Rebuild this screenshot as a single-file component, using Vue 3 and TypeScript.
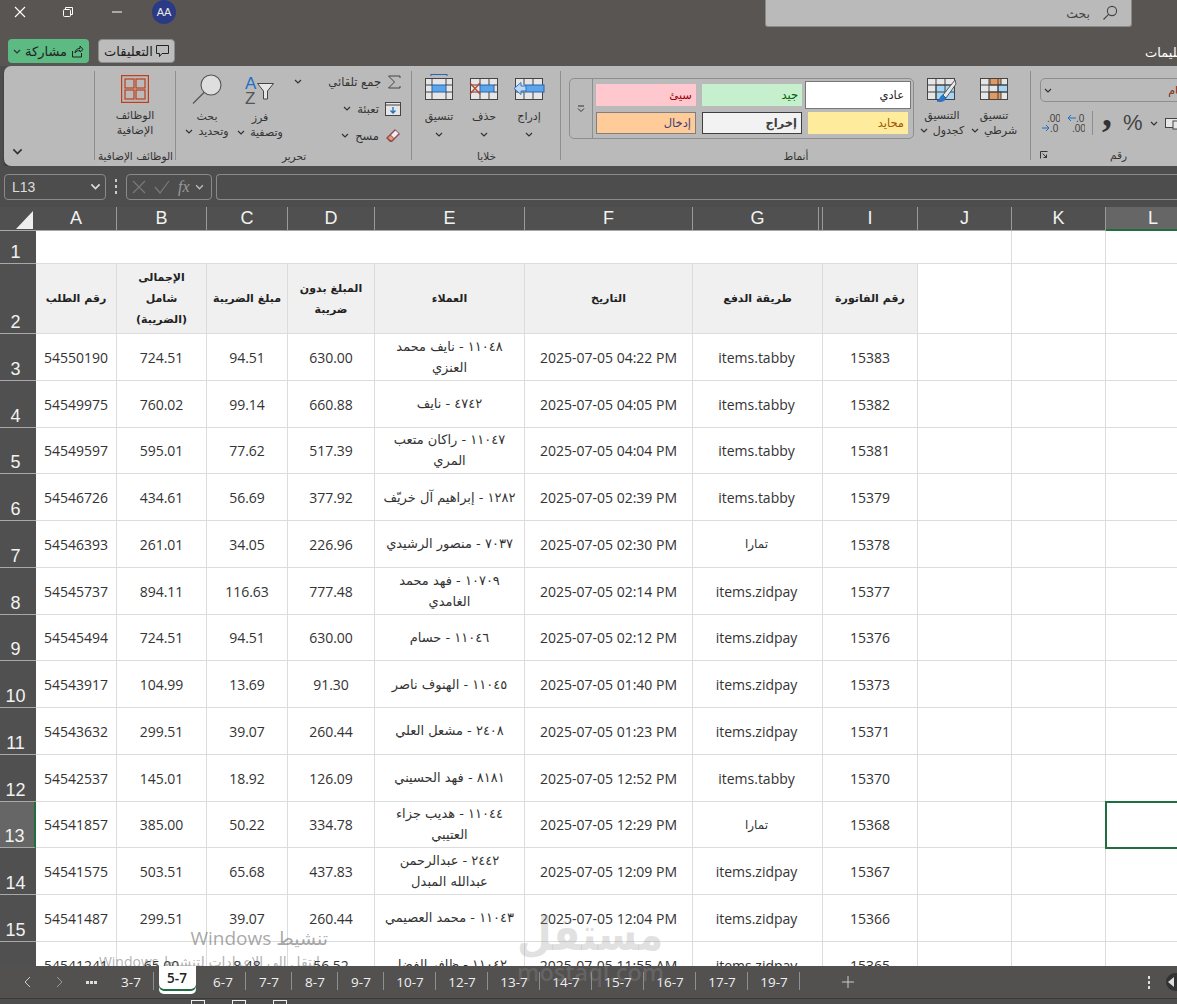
<template>
  <div class="app">
    <svg class="defs" width="0" height="0">
      <symbol id="chev" viewBox="0 0 8 5"><path d="M1 1l3 3 3-3" fill="none" stroke="currentColor" stroke-width="1.2" /></symbol>
    </svg>

    <!-- title bar -->
    <header class="topbar">
      <div class="topbar__row">
        <div class="win-controls">
          <svg width="14" height="14" viewBox="0 0 14 14"><path d="M2 2l10 10M12 2L2 12" stroke="#fff" stroke-width="1.1" /></svg>
          <svg width="12" height="12" viewBox="0 0 12 12" fill="none" stroke="#fff"><rect x="1.5" y="3.5" width="7" height="7" rx="1" /><path d="M3.5 3V1.5h7v7H9" /></svg>
          <svg width="12" height="12" viewBox="0 0 12 12"><path d="M1 6h10" stroke="#fff" /></svg>
          <div class="avatar">AA</div>
        </div>
        <div class="search">
          <span class="ar">بحث</span>
          <svg width="16" height="16" viewBox="0 0 16 16" fill="none" stroke="#444" stroke-width="1.1"><circle cx="10" cy="6" r="4.6" /><path d="M6.6 9.4L1.5 14.5" /></svg>
        </div>
      </div>
      <div class="topbar__row topbar__row--actions">
        <button class="btn-share">
          <svg class="chev" width="8" height="5"><use href="#chev" /></svg>
          <span class="ar">مشاركة</span>
          <svg width="13" height="13" viewBox="0 0 13 13" fill="none" stroke="#222"><path d="M1.5 6v6h9V8M4 8c0-3 2-4.500 5-4.500V1l3 3.500L9 7V5.500C7 5.500 5 6 4 8z" /></svg>
        </button>
        <button class="btn-comments">
          <span class="ar">التعليقات</span>
          <svg width="13" height="12" viewBox="0 0 13 12" fill="none" stroke="#222"><path d="M.5.5h12v8H6l-2.500 3v-3H.5z" /></svg>
        </button>
        <span class="tab-clipped ar">تعليمات</span>
      </div>
    </header>

    <!-- ribbon -->
    <section class="ribbon">
      <div class="group group--collapse">
        <svg class="collapse-chev" width="11" height="7"><use href="#chev" /></svg>
      </div>

      <div class="group group--addins">
        <div class="group__body">
          <div class="rbtn rbtn--addins">
            <svg class="rbtn__icon" width="28" height="28" viewBox="0 0 28 28" fill="none" stroke="#bf3e1c" stroke-width="1.2">
              <rect x=".6" y=".6" width="26.800" height="26.800" />
              <rect x="4" y="4" width="9" height="9" /><rect x="15" y="4" width="9" height="9" />
              <rect x="4" y="15" width="9" height="9" /><rect x="15" y="15" width="9" height="9" />
            </svg>
            <span class="ar">الوظائف</span>
            <span class="ar">الإضافية</span>
          </div>
        </div>
        <div class="group__label ar">الوظائف الإضافية</div>
      </div>

      <div class="group group--editing">
        <div class="group__body">
          <div class="rbtn rbtn--find">
            <svg class="rbtn__icon" width="30" height="32" viewBox="0 0 30 32">
              <circle cx="19" cy="12" r="10" fill="#dedede" stroke="#555" stroke-width="1.1" />
              <path d="M12 19.500L1 30.500" stroke="#555" stroke-width="1.200" />
            </svg>
            <span class="ar">بحث</span>
            <span class="ar with-chev">
              <svg class="chev" width="8" height="5"><use href="#chev" /></svg>وتحديد
            </span>
          </div>
          <div class="rbtn rbtn--sort">
            <svg class="rbtn__icon" width="30" height="30" viewBox="0 0 30 30">
              <text x="0" y="14" class="sort-a">A</text>
              <text x="0" y="29" class="sort-z">Z</text>
              <path d="M12.500 8.500h16l-6 7.500v8h-4v-8z" fill="#e6e6e6" stroke="#444" />
            </svg>
            <span class="ar">فرز</span>
            <span class="ar with-chev">
              <svg class="chev" width="8" height="5"><use href="#chev" /></svg>وتصفية
            </span>
          </div>
          <div class="tools">
            <div class="tools__row">
              <svg class="chev chev--far" width="8" height="5"><use href="#chev" /></svg>
              <span class="ar">جمع تلقائي</span>
              <svg width="14" height="14" viewBox="0 0 14 14" fill="none" stroke="#444"><path d="M13 3V1H1.500l6 6-6 6H13v-2" /></svg>
            </div>
            <div class="tools__row">
              <svg class="chev" width="8" height="5"><use href="#chev" /></svg>
              <span class="ar">تعبئة</span>
              <svg width="16" height="14" viewBox="0 0 16 14" fill="none"><rect x=".5" y=".5" width="15" height="13" fill="#e6e6e6" stroke="#444" /><path d="M.5 3h15" stroke="#444" /><path d="M8 5v6M5.500 8.500L8 11l2.500-2.500" stroke="#1f6fc4" stroke-width="1.300" /></svg>
            </div>
            <div class="tools__row">
              <svg class="chev" width="8" height="5"><use href="#chev" /></svg>
              <span class="ar">مسح</span>
              <svg width="16" height="15" viewBox="0 0 16 15"><path d="M10 1l5 5-8 8H5L1 10z" fill="#8f4a54" /><path d="M10.500 2.500l3 3-4.500 4.500-3-3z" fill="#eee" /><path d="M5.500 7.500l3 3L6.500 12.500 3 10z" fill="#e8a06a" /></svg>
            </div>
          </div>
        </div>
        <div class="group__label ar">تحرير</div>
      </div>

      <div class="group group--cells">
        <div class="group__body">
          <div class="rbtn rbtn--cell">
            <svg class="rbtn__icon" width="28" height="26" viewBox="0 -4 28 26" fill="none" stroke="#444">
              <path d="M6 -3.500h16M6 -5v3M22 -5v3" stroke="#2a62b5" />
              <rect x=".5" y=".5" width="27" height="21" fill="#e6e6e6" />
              <rect x="7" y="7" width="14" height="7" fill="#5ba6e8" stroke="#2a62b5" />
              <path d="M7 .5v6.500M21 .5v6.500M7 14v7.500M21 14v7.500M.5 7H7M21 7h6.500M.5 14H7M21 14h6.500" />
            </svg>
            <span class="ar">تنسيق</span>
            <svg class="chev chev--below" width="8" height="5"><use href="#chev" /></svg>
          </div>
          <div class="rbtn rbtn--cell">
            <svg class="rbtn__icon" width="30" height="26" viewBox="-1 -4 30 26" fill="none" stroke="#444">
              <rect x=".5" y=".5" width="27" height="21" fill="#e6e6e6" />
              <rect x="10" y="7" width="14" height="7" fill="#5ba6e8" stroke="#2a62b5" />
              <path d="M10 .5v6.500M19 .5v6.500M10 14v7.500M19 14v7.500M.5 7H10M24 7h3.500M.5 14H10M24 14h3.500" />
              <path d="M0 5l10 11M10 5L0 16" stroke="#c0442a" stroke-width="1.300" />
            </svg>
            <span class="ar">حذف</span>
            <svg class="chev chev--below" width="8" height="5"><use href="#chev" /></svg>
          </div>
          <div class="rbtn rbtn--cell">
            <svg class="rbtn__icon" width="32" height="26" viewBox="-2 -4 32 26" fill="none" stroke="#444">
              <rect x=".5" y=".5" width="27" height="21" fill="#e6e6e6" />
              <rect x="10" y="7" width="19" height="7" fill="#5ba6e8" stroke="#2a62b5" />
              <path d="M9 .5v6.500M18 .5v6.500M9 14v7.500M18 14v7.500M.5 14H9" />
              <path d="M-1 10.500l7-6v3.500h5v5H6v3.500z" fill="#bcd8f2" stroke="#2a72c8" />
            </svg>
            <span class="ar">إدراج</span>
            <svg class="chev chev--below" width="8" height="5"><use href="#chev" /></svg>
          </div>
        </div>
        <div class="group__label ar">خلايا</div>
      </div>

      <div class="group group--styles">
        <div class="group__body">
          <div class="gallery">
            <div class="gallery__more">
              <svg width="8" height="8" viewBox="0 0 8 8" fill="none" stroke="#333"><path d="M1 1h6M1 3.500l3 3 3-3" /></svg>
            </div>
            <div class="gallery__grid">
              <div v-for="s in cellStyles" :key="s.label" class="style-cell ar" :class="s.cls">{{ s.label }}</div>
            </div>
          </div>
          <div class="rbtn rbtn--style rbtn--table">
            <svg class="rbtn__icon" width="30" height="28" viewBox="0 0 30 28" fill="none" stroke="#444">
              <rect x=".5" y=".5" width="27" height="21" fill="#e6e6e6" />
              <rect x="9" y="7" width="18.500" height="14.500" fill="#a5d6f5" />
              <path d="M9 .5v21M18 .5v21M.5 7h27M.5 14h27" />
              <path d="M28 2L16 17l3 3L29 6z" fill="#e8e8e8" stroke="#555" />
              <path d="M16 17c-3 1-2 4-6 6 4 1 8 0 9-3z" fill="#2a78cc" stroke="#2a62b5" />
            </svg>
            <span class="ar">التنسيق</span>
            <span class="ar with-chev">
              <svg class="chev" width="8" height="5"><use href="#chev" /></svg>كجدول
            </span>
          </div>
          <div class="rbtn rbtn--style rbtn--cond">
            <svg class="rbtn__icon" width="28" height="22" viewBox="0 0 28 22" fill="none" stroke="#444">
              <rect x=".5" y=".5" width="27" height="21" fill="#e6e6e6" />
              <rect x="10" y=".5" width="11" height="6.500" fill="#e09a62" />
              <rect x="18" y="7" width="9.500" height="7" fill="#a5d6f5" />
              <rect x="9" y="14" width="12" height="7.500" fill="#e09a62" />
              <path d="M9 .5v21M18 .5v21M.5 7h27M.5 14h27" />
            </svg>
            <span class="ar">تنسيق</span>
            <span class="ar with-chev">
              <svg class="chev" width="8" height="5"><use href="#chev" /></svg>شرطي
            </span>
          </div>
        </div>
        <div class="group__label ar">أنماط</div>
      </div>

      <div class="group group--number">
        <div class="numfmt">
          <svg class="chev" width="8" height="5"><use href="#chev" /></svg>
          <span class="numfmt__text ar">عام</span>
        </div>
        <div class="numrow">
          <svg width="18" height="20" viewBox="0 0 18 20">
            <text x="5" y="9" class="dec">.00</text><text x="8" y="19" class="dec">.0</text>
            <path d="M0 15h7M4 12l3 3-3 3" fill="none" stroke="#1f6fc4" />
          </svg>
          <svg width="18" height="20" viewBox="0 0 18 20">
            <text x="9" y="9" class="dec">.0</text><text x="5" y="19" class="dec">.00</text>
            <path d="M9 5H1M4 2L1 5l3 3" fill="none" stroke="#1f6fc4" />
          </svg>
          <i class="numrow__sep"></i>
          <span class="numrow__comma">,</span>
          <span class="numrow__pct">%</span>
          <svg class="chev" width="8" height="5"><use href="#chev" /></svg>
          <svg width="18" height="14" viewBox="0 0 18 14" fill="none" stroke="#444"><rect x=".5" y="2.500" width="14" height="9" fill="#e6e6e6" /><rect x="8" y="5" width="10" height="8" fill="#e6e6e6" /></svg>
        </div>
        <div class="number-foot">
          <svg width="8" height="8" viewBox="0 0 8 8" fill="none" stroke="#333"><path d="M.5 7.500v-7h7M2.500 2.500l4 4M6.500 3.500v3h-3" /></svg>
          <span class="ar">رقم</span>
        </div>
      </div>
    </section>

    <!-- formula bar -->
    <div class="formula">
      <div class="namebox">
        <span>L13</span>
        <svg width="11" height="7"><use href="#chev" /></svg>
      </div>
      <div class="formula__grip"><i></i><i></i><i></i></div>
      <div class="fxbox">
        <svg width="14" height="14" viewBox="0 0 14 14"><path d="M1 1l12 12M13 1L1 13" stroke="#7a7a7a" stroke-width="1.200" /></svg>
        <svg width="16" height="14" viewBox="0 0 16 14"><path d="M1 7l5 6L15 1" fill="none" stroke="#7a7a7a" stroke-width="1.200" /></svg>
        <span class="fxbox__fx">fx</span>
        <svg width="9" height="6"><use href="#chev" /></svg>
      </div>
      <div class="formula__input"></div>
    </div>

    <!-- sheet -->
    <main class="sheet">
      <div class="grid">
        <div class="corner"><svg width="18" height="18"><path d="M17 0v18H0z" fill="#eee" /></svg></div>
        <div
          v-for="c in columns"
          :key="c"
          class="colhead"
          :class="{ 'colhead--active': c === 'L', 'colhead--double': c === 'G' }"
        >{{ c }}</div>

        <div class="rowhead">1</div>
        <div class="cell cell--title"></div>
        <div class="cell"></div>
        <div class="cell"></div>

        <div class="rowhead">2</div>
        <div v-for="h in headers" :key="h" class="cell cell--head ar">{{ h }}</div>
        <div class="cell"></div>
        <div class="cell"></div>
        <div class="cell"></div>

        <template v-for="(r, i) in rows" :key="r.order">
          <div class="rowhead" :class="{ 'rowhead--active': i + 3 === 13 }">{{ i + 3 }}</div>
          <div class="cell">{{ r.order }}</div>
          <div class="cell">{{ r.total }}</div>
          <div class="cell">{{ r.tax }}</div>
          <div class="cell">{{ r.net }}</div>
          <div class="cell cell--client ar" dir="rtl">{{ r.client }}</div>
          <div class="cell">2025-07-05 {{ r.time }}</div>
          <div class="cell cell--pay" :class="{ 'cell--pay-ar': r.pay === tamara }">{{ r.pay }}</div>
          <div class="cell">{{ r.invoice }}</div>
          <div class="cell"></div>
          <div class="cell"></div>
          <div class="cell" :class="{ 'cell--selected': i + 3 === 13 }"></div>
        </template>
      </div>
      <div class="activation">
        <div class="activation__title" dir="rtl">تنشيط Windows</div>
        <div class="activation__text" dir="rtl">انتقل إلى الإعدادات لتنشيط Windows.</div>
      </div>
    </main>

    <!-- sheet tabs -->
    <footer class="tabs">
      <div class="tabs__nav">
        <svg width="8" height="12" viewBox="0 0 8 12" fill="none" stroke="#ccc"><path d="M7 1L2 6l5 5" /></svg>
        <svg width="8" height="12" viewBox="0 0 8 12" fill="none" stroke="#999"><path d="M1 1l5 5-5 5" /></svg>
        <span class="tabs__dots"><i></i><i></i><i></i></span>
      </div>
      <div
        v-for="t in tabs"
        :key="t"
        class="tab"
        :class="{ 'tab--active': t === '5-7', 'tab--wide': t.length > 3 }"
      ><span>{{ t }}</span></div>
      <svg class="tabs__add" width="12" height="12" viewBox="0 0 12 12"><path d="M6 0v12M0 6h12" stroke="#ccc" /></svg>
      <div class="tabs__end">
        <span class="tabs__kebab"><i></i><i></i><i></i></span>
        <svg width="11" height="18" viewBox="0 0 11 18"><path d="M9 0a9 9 0 0 0 0 18h2V0z" fill="#333" /><path d="M2 9l6-5v10z" fill="#ddd" /></svg>
      </div>
    </footer>
    <div class="statusbar">
      <i></i><i></i><i></i>
    </div>

    <div class="mostaql" aria-hidden="true">
      <div class="mostaql__ar ar">مستقل</div>
      <div class="mostaql__en">mostaql.com</div>
    </div>
  </div>
</template>

<script setup lang="ts">
interface Row {
  order: string
  total: string
  tax: string
  net: string
  client: string
  time: string
  pay: string
  invoice: string
}

const columns = ['A', 'B', 'C', 'D', 'E', 'F', 'G', 'I', 'J', 'K', 'L']

const headers = [
  'رقم الطلب',
  'الإجمالى\nشامل\n(الضريبة)',
  'مبلغ الضريبة',
  'المبلغ بدون\nضريبة',
  'العملاء',
  'التاريخ',
  'طريقة الدفع',
  'رقم الفاتورة',
]

const cellStyles = [
  { label: 'سيئ', cls: 'style-cell--bad' },
  { label: 'جيد', cls: 'style-cell--good' },
  { label: 'عادي', cls: 'style-cell--normal' },
  { label: 'إدخال', cls: 'style-cell--input' },
  { label: 'إخراج', cls: 'style-cell--output' },
  { label: 'محايد', cls: 'style-cell--neutral' },
]

const tabby = 'items.tabby'
const zidpay = 'items.zidpay'
const tamara = 'تمارا'

const rows: Row[] = [
  { order: '54550190', total: '724.51', tax: '94.51', net: '630.00', client: '١١٠٤٨ - نايف محمد العنزي', time: '04:22 PM', pay: tabby, invoice: '15383' },
  { order: '54549975', total: '760.02', tax: '99.14', net: '660.88', client: '٤٧٤٢ - نايف', time: '04:05 PM', pay: tabby, invoice: '15382' },
  { order: '54549597', total: '595.01', tax: '77.62', net: '517.39', client: '١١٠٤٧ - راكان متعب المري', time: '04:04 PM', pay: tabby, invoice: '15381' },
  { order: '54546726', total: '434.61', tax: '56.69', net: '377.92', client: '١٢٨٢ - إبراهيم آل خريّف', time: '02:39 PM', pay: tabby, invoice: '15379' },
  { order: '54546393', total: '261.01', tax: '34.05', net: '226.96', client: '٧٠٣٧ - منصور الرشيدي', time: '02:30 PM', pay: tamara, invoice: '15378' },
  { order: '54545737', total: '894.11', tax: '116.63', net: '777.48', client: '١٠٧٠٩ - فهد محمد الغامدي', time: '02:14 PM', pay: zidpay, invoice: '15377' },
  { order: '54545494', total: '724.51', tax: '94.51', net: '630.00', client: '١١٠٤٦ - حسام', time: '02:12 PM', pay: zidpay, invoice: '15376' },
  { order: '54543917', total: '104.99', tax: '13.69', net: '91.30', client: '١١٠٤٥ - الهنوف ناصر', time: '01:40 PM', pay: zidpay, invoice: '15373' },
  { order: '54543632', total: '299.51', tax: '39.07', net: '260.44', client: '٢٤٠٨ - مشعل العلي', time: '01:23 PM', pay: zidpay, invoice: '15371' },
  { order: '54542537', total: '145.01', tax: '18.92', net: '126.09', client: '٨١٨١ - فهد الحسيني', time: '12:52 PM', pay: tabby, invoice: '15370' },
  { order: '54541857', total: '385.00', tax: '50.22', net: '334.78', client: '١١٠٤٤ - هديب جزاء العتيبي', time: '12:29 PM', pay: tamara, invoice: '15368' },
  { order: '54541575', total: '503.51', tax: '65.68', net: '437.83', client: '٢٤٤٢ - عبدالرحمن عبدالله المبدل', time: '12:09 PM', pay: zidpay, invoice: '15367' },
  { order: '54541487', total: '299.51', tax: '39.07', net: '260.44', client: '١١٠٤٣ - محمد العصيمي', time: '12:04 PM', pay: zidpay, invoice: '15366' },
  { order: '54541241', total: '65.00', tax: '8.48', net: '56.52', client: '١١٠٤٢ - ظافر الفضل', time: '11:55 AM', pay: zidpay, invoice: '15365' },
]

const tabs = ['3-7', '5-7', '6-7', '7-7', '8-7', '9-7', '10-7', '12-7', '13-7', '14-7', '15-7', '16-7', '17-7', '19-7']
</script>

<style>
html,
body {
  margin: 0;
  background: #4d4d4d;
}
</style>

<style scoped>
.app {
  position: relative;
  width: 1177px;
  height: 1004px;
  overflow: hidden;
  font-family: "Open Sans", "DejaVu Sans", sans-serif;
  background: #4d4d4d;
  color: #222;
}

.defs {
  position: absolute;
}

.ar {
  font-family: "DejaVu Sans", sans-serif;
}

.chev {
  color: #333;
  flex-shrink: 0;
}

/* title bar */
.topbar {
  height: 66px;
  background: #595552;
}

.topbar__row {
  height: 28px;
  display: flex;
  justify-content: space-between;
  padding-right: 45px;
}

.topbar__row--actions {
  margin-top: 11px;
  height: 24px;
  padding: 0 0 0 8px;
  justify-content: flex-start;
  gap: 9px;
}

.win-controls {
  display: flex;
  align-items: center;
  height: 24px;
  padding-left: 13px;
}

.win-controls svg:nth-child(2) {
  margin-left: 35px;
}

.win-controls svg:nth-child(3) {
  margin-left: 37px;
}

.avatar {
  width: 24px;
  height: 24px;
  margin-left: 29px;
  border-radius: 50%;
  background: #2b3a85;
  color: #e8e8e8;
  font: 11px/24px "Liberation Sans", sans-serif;
  text-align: center;
}

.search {
  width: 367px;
  height: 27px;
  display: flex;
  align-items: center;
  justify-content: flex-end;
  gap: 12px;
  padding-right: 13px;
  box-sizing: border-box;
  background: #bababa;
  border: 1px solid #8a8a8a;
  border-top: 0;
  border-radius: 0 0 3px 3px;
  font-size: 12.5px;
  color: #444;
}

.btn-share,
.btn-comments {
  display: flex;
  align-items: center;
  height: 24px;
  box-sizing: border-box;
  padding: 0;
  font-size: 13px;
  color: #222;
  border-radius: 4px;
}

.btn-share {
  width: 81px;
  justify-content: center;
  gap: 4px;
  background: #5cbb82;
  border: 0;
}

.btn-comments {
  width: 77px;
  justify-content: center;
  gap: 3px;
  background: #bcbcbc;
  border: 1px solid #8c8c8c;
}

.tab-clipped {
  margin-left: auto;
  width: 32px;
  flex-shrink: 0;
  overflow: hidden;
  white-space: nowrap;
  color: #fff;
  font-size: 13px;
  line-height: 28px;
}

/* ribbon */
.ribbon {
  display: flex;
  height: 100px;
  margin-left: 4px;
  background: #bababa;
  border-radius: 7px 0 0 7px;
  box-shadow: 0 2px 2px #333;
  font-size: 11px;
  color: #333;
}

.group {
  position: relative;
  display: flex;
  flex-direction: column;
  flex-shrink: 0;
  box-sizing: border-box;
  height: 100px;
  padding-top: 5px;
}

.group::after {
  content: "";
  position: absolute;
  right: 0;
  top: 5px;
  bottom: 6px;
  width: 1px;
  background: #8e8e8e;
}

.group__body {
  flex: 1;
  display: flex;
  min-height: 0;
}

.group__label {
  height: 17px;
  line-height: 14px;
  text-align: center;
  font-size: 10.5px;
}

.group--collapse {
  width: 91px;
  justify-content: flex-end;
  padding: 0 0 11px 8px;
}

.collapse-chev {
  color: #333;
}

.group--addins {
  width: 81px;
}

.group--editing {
  width: 236px;
}

.group--cells {
  width: 149px;
}

.group--styles {
  width: 470px;
}

.group--number {
  width: 175px;
  padding: 12px 0 0 9px;
}

.group--number::after {
  display: none;
}

.rbtn {
  display: flex;
  flex-direction: column;
  align-items: center;
  line-height: 15px;
  white-space: nowrap;
}

.rbtn__icon {
  margin-bottom: 5px;
}

.with-chev {
  display: flex;
  align-items: center;
  gap: 5px;
}

.chev--below {
  margin-top: 8px;
}

.rbtn--addins {
  width: 80px;
  padding-top: 4px;
}

.rbtn--find {
  width: 54px;
  margin-left: 4px;
  padding-top: 2px;
}

.rbtn--find .rbtn__icon {
  margin-bottom: 4px;
}

.rbtn--sort {
  width: 52px;
  padding-top: 4px;
}

.tools {
  width: 124px;
  margin-top: -3px;
  padding-right: 9px;
  box-sizing: border-box;
}

.tools__row {
  display: flex;
  align-items: center;
  justify-content: flex-end;
  gap: 6px;
  height: 27px;
  font-size: 11.5px;
}

.chev--far {
  margin-right: auto;
  margin-left: 8px;
}

.rbtn--cell {
  width: 44px;
  padding-top: 3px;
  margin-left: 1px;
}

.rbtn--cell:first-child {
  margin-left: 5px;
}

.rbtn--cell .rbtn__icon {
  margin-bottom: 9px;
}

.gallery {
  display: flex;
  width: 345px;
  height: 61px;
  margin: 7px 0 0 8px;
  box-sizing: border-box;
  border: 1px solid #8e8e8e;
  border-radius: 5px;
}

.gallery__more {
  width: 22px;
  flex-shrink: 0;
  display: flex;
  align-items: center;
  justify-content: center;
  border-right: 1px solid #8e8e8e;
}

.gallery__grid {
  flex: 1;
  display: grid;
  grid-template-columns: repeat(3, 100px);
  grid-auto-rows: 22px;
  column-gap: 6px;
  row-gap: 6px;
  padding: 5px 0 0 3px;
}

.style-cell {
  display: flex;
  align-items: center;
  justify-content: flex-end;
  padding-right: 4px;
  box-sizing: border-box;
  font-size: 11.5px;
}

.style-cell--bad {
  background: #ffc7ce;
  color: #9c0006;
}

.style-cell--good {
  background: #c6efce;
  color: #006100;
}

.style-cell--normal {
  background: #fff;
  color: #222;
  outline: 2px solid #fff;
  box-shadow: 0 0 0 3px #777;
}

.style-cell--input {
  background: #ffcc99;
  color: #3f3f76;
  border: 1px solid #7f7f7f;
}

.style-cell--output {
  background: #f2f2f2;
  color: #3f3f3f;
  border: 1px solid #3f3f3f;
  font-weight: 700;
}

.style-cell--neutral {
  background: #ffeb9c;
  color: #9c5700;
}

.rbtn--style {
  width: 52px;
  padding-top: 7px;
}

.rbtn--table {
  margin-left: 2px;
}

.rbtn--table .rbtn__icon {
  margin-bottom: 2px;
}

.rbtn--cond .rbtn__icon {
  margin-bottom: 8px;
}

.numfmt {
  display: flex;
  align-items: center;
  height: 24px;
  width: 145px;
  padding-left: 3px;
  box-sizing: border-box;
  border: 1px solid #8e8e8e;
  border-radius: 5px;
}

.numfmt__text {
  margin-left: auto;
  color: #7a2a10;
  white-space: nowrap;
  margin-right: -1px;
  font-size: 11px;
}

.numrow {
  display: flex;
  align-items: center;
  gap: 7px;
  height: 26px;
  margin-top: 8px;
  padding-left: 2px;
}

.numrow__sep {
  width: 1px;
  height: 24px;
  flex-shrink: 0;
  background: #8e8e8e;
}

.numrow__comma {
  width: 14px;
  height: 26px;
  font: 700 40px/5px "Liberation Serif", serif;
  color: #333;
  text-align: center;
}

.numrow__pct {
  font: 22px/24px "Liberation Sans", sans-serif;
  color: #444;
  margin-left: 2px;
}

.dec {
  font: 10px "Liberation Sans", sans-serif;
  fill: #444;
}

.sort-a {
  font: 17px "Liberation Sans", sans-serif;
  fill: #1f6fc4;
}

.sort-z {
  font: 17px "Liberation Sans", sans-serif;
  fill: #555;
}

.number-foot {
  display: flex;
  align-items: center;
  margin-top: 13px;
  font-size: 10.5px;
}

.number-foot span {
  margin-left: 62px;
}

/* formula bar */
.formula {
  display: flex;
  align-items: center;
  height: 41px;
  padding: 0 0 0 4px;
  box-sizing: border-box;
  background: #4d4d4d;
  color: #bbb;
}

.namebox {
  display: flex;
  align-items: center;
  justify-content: space-between;
  width: 102px;
  height: 26px;
  padding: 0 4px 0 7px;
  box-sizing: border-box;
  border: 1px solid #8a8a8a;
  border-radius: 4px;
  font: 14px "Liberation Sans", sans-serif;
  color: #ddd;
}

.formula__grip {
  width: 20px;
  display: flex;
  flex-direction: column;
  align-items: center;
  gap: 3px;
}

.formula__grip i {
  width: 2px;
  height: 3px;
  background: #ccc;
}

.fxbox {
  display: flex;
  align-items: center;
  gap: 8px;
  width: 86px;
  height: 26px;
  padding-left: 5px;
  box-sizing: border-box;
  border: 1px solid #8a8a8a;
  border-radius: 4px;
}

.fxbox__fx {
  font: italic 16px "Liberation Serif", serif;
  color: #9a9a9a;
  margin-right: -3px;
}

.formula__input {
  flex: 1;
  height: 26px;
  margin-left: 4px;
  box-sizing: border-box;
  border: 1px solid #8a8a8a;
  border-right: 0;
  border-radius: 4px 0 0 4px;
}

/* sheet */
.sheet {
  position: relative;
  height: 759px;
  overflow: hidden;
  background: #fff;
}

.grid {
  display: grid;
  grid-template-columns: 36px 81px 90px 81px 87px 150px 168px 130px 95px 94px 94px 94px;
  grid-template-rows: 24px 33px 70px repeat(14, 46.75px);
  width: 1200px;
}

.corner,
.colhead {
  background: #505050;
  border-bottom: 1px solid #a8a8a8;
  box-sizing: border-box;
}

.corner {
  display: flex;
  align-items: flex-end;
  justify-content: flex-end;
  padding: 0 2px 1px 0;
}

.colhead {
  display: flex;
  align-items: center;
  justify-content: center;
  font: 18px "Liberation Sans", sans-serif;
  color: #f2f2f2;
  border-right: 1px solid #9a9a9a;
}

.colhead--double {
  box-shadow: inset -3px 0 0 #505050, inset -4px 0 0 #9a9a9a;
}

.colhead--active {
  background: #666;
  border-bottom: 2px solid #1e6e42;
  border-right: 0;
}

.rowhead {
  display: flex;
  align-items: flex-end;
  justify-content: center;
  box-sizing: border-box;
  padding-right: 5px;
  background: #505050;
  border-bottom: 1px solid #a8a8a8;
  font: 18px/22px "Liberation Sans", sans-serif;
  color: #f2f2f2;
}

.rowhead--active {
  background: #666;
  border-right: 2px solid #1e6e42;
}

.cell {
  display: flex;
  align-items: center;
  justify-content: center;
  box-sizing: border-box;
  padding: 1px 3px 0;
  background: #fff;
  border-right: 1px solid #dcdcdc;
  border-bottom: 1px solid #dcdcdc;
  font-size: 14px;
  color: #333;
  text-align: center;
  white-space: nowrap;
}

.cell--title {
  grid-column: span 9;
}

.cell--head {
  background: #f0f0f0;
  font-size: 11px;
  font-weight: 700;
  line-height: 21px;
  color: #222;
  white-space: pre-line;
  padding: 0 2px;
}

.cell--client {
  font-size: 13px;
  line-height: 21px;
  white-space: normal;
  padding: 0 6px;
}

.cell--pay {
  padding-right: 5px;
}

.cell--pay-ar {
  font-family: "DejaVu Sans", sans-serif;
  font-size: 12px;
}

.cell--selected {
  position: relative;
  z-index: 1;
  outline: 2px solid #1e6e42;
  outline-offset: -1px;
}

.activation {
  position: absolute;
  right: 0;
  top: 0;
  width: 1177px;
  pointer-events: none;
}

.activation__title {
  position: absolute;
  left: 188px;
  top: 718px;
  width: 140px;
  white-space: nowrap;
  font: 19px "Open Sans", "DejaVu Sans", sans-serif;
  color: rgba(110, 110, 110, 0.6);
}

.activation__text {
  position: absolute;
  left: 95px;
  top: 745px;
  width: 225px;
  white-space: nowrap;
  font: 14px "Open Sans", "DejaVu Sans", sans-serif;
  color: rgba(110, 110, 110, 0.55);
}

/* sheet tabs */
.tabs {
  display: flex;
  align-items: center;
  height: 32px;
  background: #525150;
  border-bottom: 1px solid #3a3a3a;
  font-size: 13.5px;
  color: #f0f0f0;
}

.tabs__nav {
  display: flex;
  align-items: center;
  width: 108px;
  padding-left: 23px;
  box-sizing: border-box;
  flex-shrink: 0;
}

.tabs__nav svg:nth-child(2) {
  margin-left: 25px;
}

.tabs__dots {
  display: flex;
  gap: 1px;
  margin-left: 22px;
}

.tabs__dots i {
  width: 3px;
  height: 3px;
  background: #ddd;
}

.tab {
  position: relative;
  width: 46px;
  height: 32px;
  flex-shrink: 0;
  display: flex;
  align-items: center;
  justify-content: center;
  box-sizing: border-box;
}

.tab--wide {
  width: 52px;
}

.tab::after {
  content: "";
  position: absolute;
  right: 0;
  top: 6px;
  height: 18px;
  width: 1px;
  background: #8f8f8f;
}

.tab--active::after {
  display: none;
}

.tab--active span {
  width: 37px;
  height: 28px;
  margin-top: -4px;
  box-sizing: border-box;
  background: #fff;
  color: #222;
  border-radius: 0 0 5px 5px;
  text-align: center;
  font-weight: 600;
  line-height: 24px;
  box-shadow: inset 0 -3px 0 #fff, inset 0 -5px 0 #1e6e42;
}

.tabs__add {
  margin-left: 42px;
}

.tabs__end {
  margin-left: auto;
  display: flex;
  align-items: center;
  gap: 16px;
}

.tabs__kebab {
  display: flex;
  flex-direction: column;
  gap: 2px;
}

.tabs__kebab i {
  width: 2px;
  height: 3px;
  background: #ddd;
}

.statusbar {
  height: 5px;
  display: flex;
  gap: 27px;
  padding: 1px 0 0 191px;
  background: #4d4d4d;
}

.statusbar i {
  width: 14px;
  height: 5px;
  border: 1px solid #eee;
  border-bottom: 0;
  box-sizing: border-box;
}

/* watermark */
.mostaql {
  position: absolute;
  left: 517px;
  top: 906px;
  width: 143px;
  text-align: center;
  pointer-events: none;
  color: rgba(150, 150, 150, 0.28);
}

.mostaql__ar {
  font-size: 40px;
  font-weight: 700;
  line-height: 56px;
  white-space: nowrap;
  transform: scaleY(1.15);
}

.mostaql__en {
  font: 600 23.5px/26px "Open Sans", sans-serif;
  margin-top: -3px;
}
</style>
